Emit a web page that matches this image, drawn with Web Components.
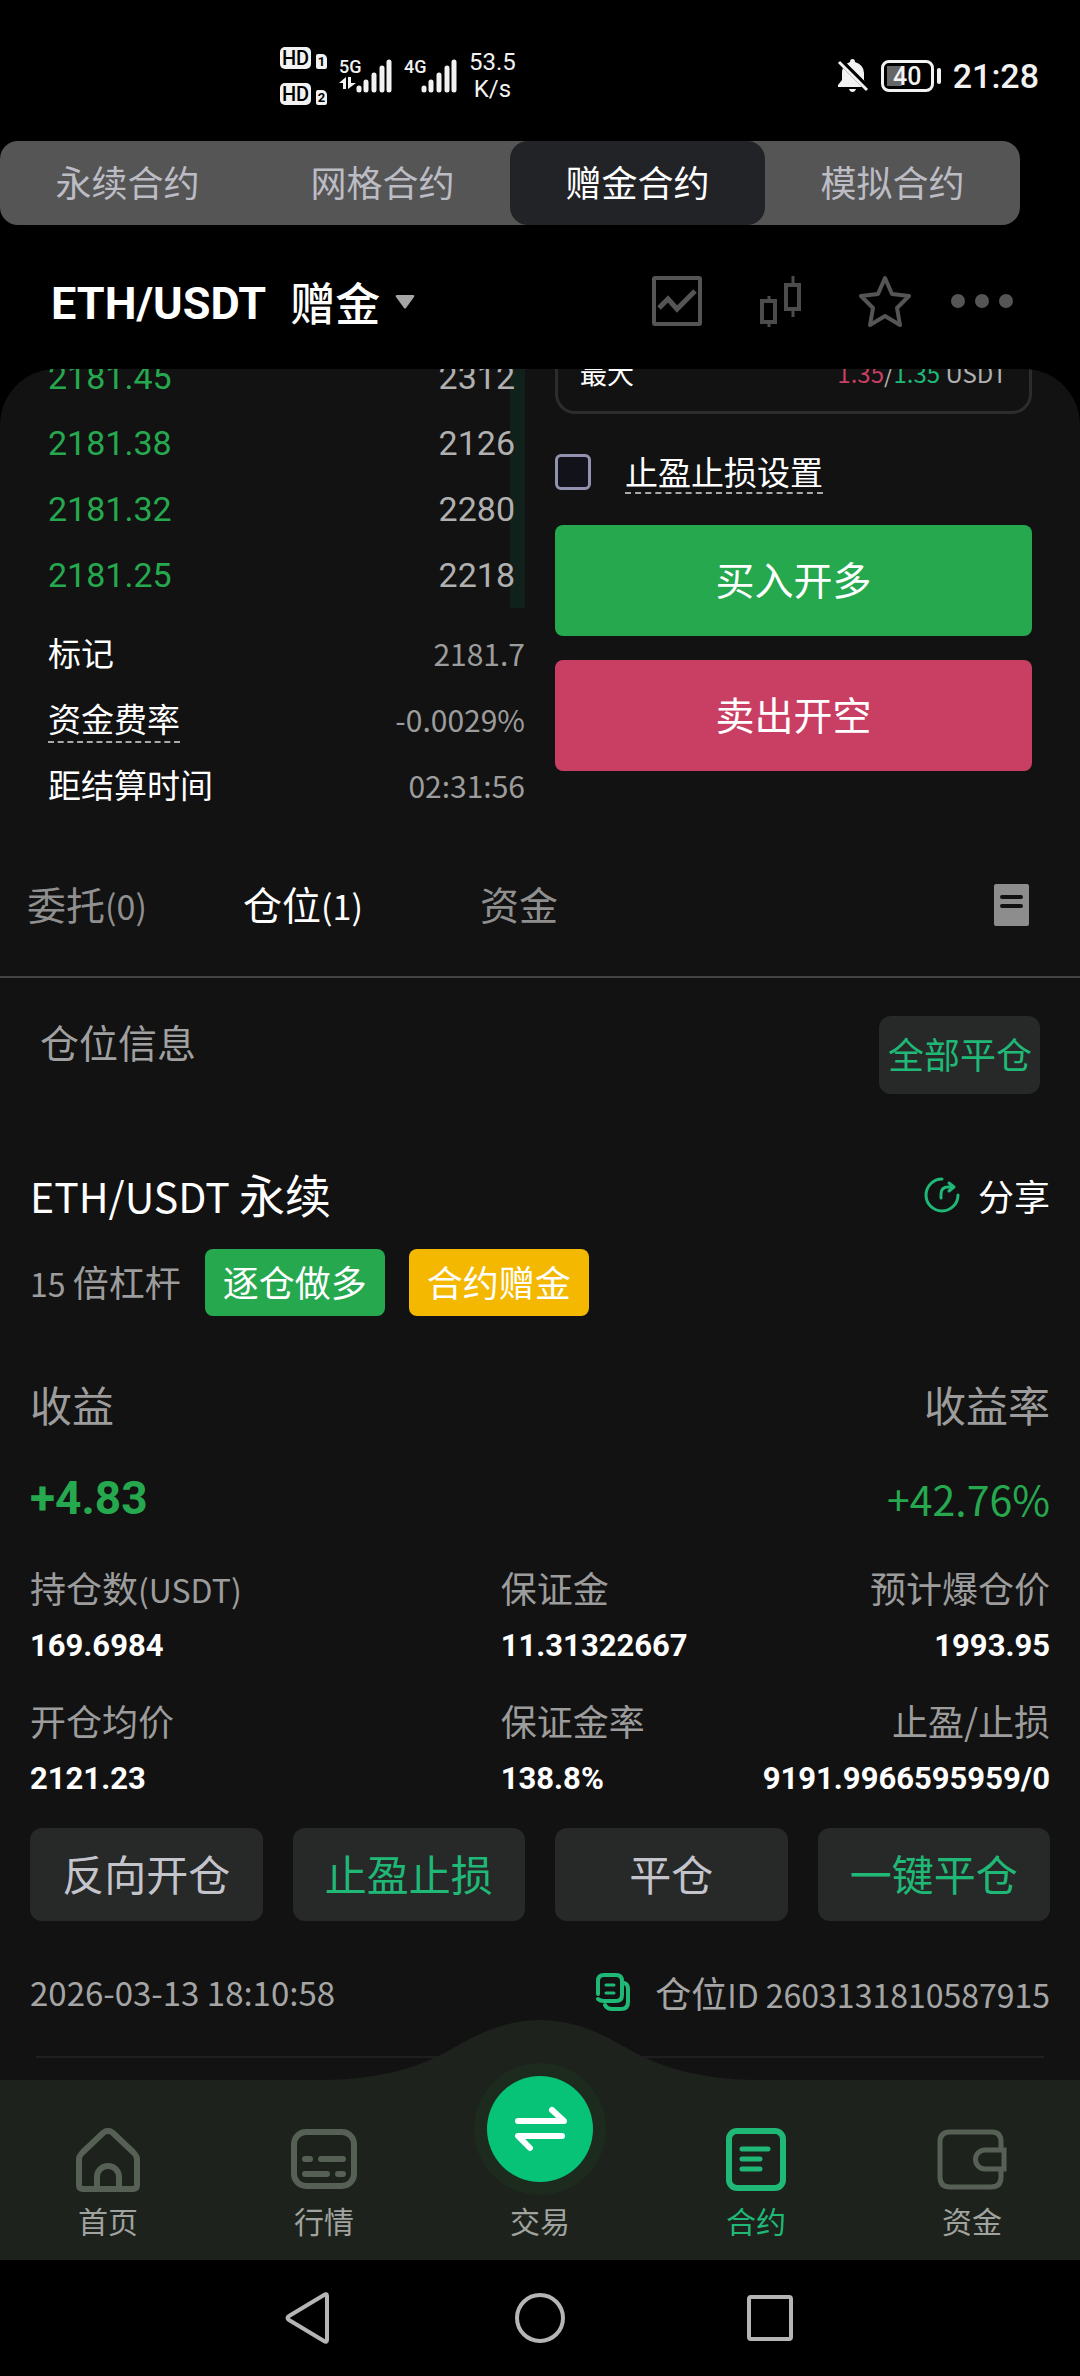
<!DOCTYPE html>
<html lang="zh-CN">
<head>
<meta charset="UTF-8">
<meta name="viewport" content="width=device-width, initial-scale=1.0">
<title>ETH/USDT 赠金合约</title>
<style>
    :root {
        --cjk: "Noto Sans CJK SC", "Noto Sans", sans-serif;
        --din: Roboto, "Noto Sans CJK SC", sans-serif;
        --green: #26a84f;
        --mint: #1fb877;
        --red: #c93f63;
        --yellow: #f4b800;
        --sheet: #121212;
        --panel: #272928;
        --bar: #1d221c;
        --muted: #9c9c9c;
    }

    body {
        margin: 0;
        min-height: 100vh;
        display: flex;
        flex-direction: column;
        background: #000;
        color: #fff;
        font-family: var(--cjk);
    }

    main {
        flex: 1;
        overflow: hidden;
        background: var(--sheet);
        border-radius: 56px 56px 0 0;
    }

    /* the list is scrolled a little under the header */
    .trade {
        display: grid;
        grid-template-columns: 1fr 1fr;
        gap: 30px;
        margin-top: -25px;
        padding: 0 48px;
    }
</style>
</head>
<body>
    <status-bar></status-bar>
    <contract-tabs></contract-tabs>
    <pair-header>ETH/USDT</pair-header>
    <main>
        <div class="trade">
            <order-book></order-book>
            <order-form></order-form>
        </div>
        <position-tabs></position-tabs>
        <position-card></position-card>
    </main>
    <tab-bar>
        <tab-item label="首页">
            <svg width="66" height="64" viewBox="0 0 66 64" fill="none" stroke="#566055" stroke-width="6" stroke-linejoin="round"><path d="M28 5Q33 1 38 5L58 24Q62 28 62 31V57Q62 61 58 61H8Q4 61 4 57V31Q4 28 8 24ZM22 60V49a11 11 0 0 1 22 0V60"/></svg>
        </tab-item>
        <tab-item label="行情">
            <svg width="68" height="64" viewBox="0 0 68 64" fill="none" stroke="#566055" stroke-width="6" stroke-linecap="round"><rect x="4" y="4" width="60" height="54" rx="12"/><path d="M15 31h5M31 31h22M15 46h22M48 46h5"/></svg>
        </tab-item>
        <tab-item label="交易"></tab-item>
        <tab-item label="合约" active>
            <svg width="62" height="64" viewBox="0 0 62 64" fill="none" stroke="#1fb877" stroke-width="6" stroke-linecap="round"><rect x="4" y="3" width="54" height="57" rx="8"/><path stroke-width="5" d="M17 21h26M17 31h18M17 41h18"/></svg>
        </tab-item>
        <tab-item label="资金">
            <svg width="70" height="64" viewBox="0 0 70 64" fill="none" stroke="#566055" stroke-width="5"><path d="M64 22V14Q64 4 55 4H13Q3 4 3 14V49Q3 59 13 59H54Q64 59 64 49V41M67 22H48a9 9 0 0 0 0 19H67Z"/></svg>
        </tab-item>
    </tab-bar>
    <system-nav></system-nav>

<script>
    class StatusBar extends HTMLElement {
        connectedCallback() {
            this.attachShadow({ mode: 'open' });
            this.shadowRoot.innerHTML = `
                <style>
                    :host {
                        display: flex;
                        align-items: center;
                        justify-content: space-between;
                        height: 131px;
                        padding: 10px 41px 0 280px;
                        font-family: var(--din);
                        color: #f2f2f2;
                    }

                    .group {
                        display: flex;
                        align-items: center;
                    }

                    .hd {
                        display: grid;
                        grid-template-columns: 31px 11px;
                        gap: 14px 5px;
                        align-items: end;
                        margin-right: 12px;
                    }

                    .hd b {
                        height: 22px;
                        border-radius: 5px;
                        background: #f2f2f2;
                        color: #000;
                        font-size: 20px;
                        font-weight: 500;
                        line-height: 22px;
                        text-align: center;
                    }

                    .hd i {
                        height: 15px;
                        border-radius: 2px 5px 2px 2px;
                        background: #f2f2f2;
                        color: #000;
                        font: bold 13px/15px Roboto, sans-serif;
                        text-align: center;
                    }

                    .signal {
                        display: flex;
                        align-items: flex-end;
                        margin-right: 12px;
                    }

                    .signal div {
                        display: flex;
                        flex-direction: column;
                        width: 18px;
                        height: 35px;
                        font-size: 18px;
                        font-weight: 500;
                        line-height: 18px;
                    }

                    .signal svg {
                        display: block;
                    }

                    .signal .bars {
                        margin-left: -1px;
                    }

                    .speed {
                        font-size: 24px;
                        line-height: 27px;
                        text-align: center;
                    }

                    .right {
                        gap: 12px;
                    }

                    .right time {
                        font-size: 34px;
                        font-weight: 500;
                        line-height: 40px;
                    }

                    .battery {
                        display: flex;
                        align-items: center;
                        gap: 3px;
                    }

                    .battery span {
                        box-sizing: border-box;
                        width: 53px;
                        height: 32px;
                        border: 3px solid #f2f2f2;
                        border-radius: 8px;
                        background: linear-gradient(#666, #666) 3px center / 15px 20px no-repeat;
                        font-size: 25px;
                        font-weight: 500;
                        line-height: 27px;
                        text-align: center;
                    }

                    .battery::after {
                        content: '';
                        width: 4px;
                        height: 16px;
                        border-radius: 2px;
                        background: #f2f2f2;
                    }
                </style>
                <div class="group">
                    <div class="hd"><b>HD</b><i>1</i><b>HD</b><i>2</i></div>
                    <div class="signal">
                        <div>5G<svg width="18" height="14" viewBox="0 0 18 14" fill="#f2f2f2"><path d="M0 7L7 1V13H4V7ZM9 1H12V7H17L9 13Z"/></svg></div>
                        ${this.bars()}
                    </div>
                    <div class="signal">
                        <div>4G</div>
                        ${this.bars()}
                    </div>
                    <div class="speed">53.5<br>K/s</div>
                </div>
                <div class="group right">
                    <svg width="32" height="34" viewBox="0 0 32 34" fill="#f2f2f2"><path d="M6 9L25 28H1V26L5 21V13Q5 11 6 9ZM9 5Q11 4 13 3Q13 0 15.500 0Q18 0 18 3Q27 6 27 14V21L28 23ZM12 30H19Q18 33 15.500 33Q13 33 12 30Z"/><path d="M2 3L30 31" stroke="#f2f2f2" stroke-width="3"/><path d="M5 1L32 28" stroke="#000" stroke-width="2"/></svg>
                    <div class="battery"><span>40</span></div>
                    <time>21:28</time>
                </div>
            `;
        }

        bars() {
            return `<svg class="bars" width="36" height="34" viewBox="0 0 36 34" stroke="#f2f2f2" stroke-width="5" stroke-linecap="round"><path d="M3 29V31M10 23V31M18 16V31M26 9V31M33 3V31"/></svg>`;
        }
    }

    class ContractTabs extends HTMLElement {
        connectedCallback() {
            this.attachShadow({ mode: 'open' });
            this.shadowRoot.innerHTML = `
                <style>
                    :host {
                        display: grid;
                        grid-template-columns: repeat(4, 1fr);
                        margin-right: 60px;
                        border-radius: 18px;
                        background: #555;
                    }

                    button {
                        height: 84px;
                        padding: 0 0 4px;
                        border: none;
                        border-radius: 18px;
                        background: none;
                        color: #bcbcc4;
                        font: 36px/80px var(--cjk);
                        cursor: pointer;
                    }

                    button.active {
                        background: #222327;
                        color: #fff;
                    }
                </style>
                <button>永续合约</button>
                <button>网格合约</button>
                <button class="active">赠金合约</button>
                <button>模拟合约</button>
            `;
        }
    }

    class PairHeader extends HTMLElement {
        connectedCallback() {
            this.attachShadow({ mode: 'open' });
            this.shadowRoot.innerHTML = `
                <style>
                    :host {
                        display: flex;
                        align-items: center;
                        justify-content: space-between;
                        height: 144px;
                        padding: 8px 66px 0 51px;
                        box-sizing: border-box;
                    }

                    .pair, .tools {
                        display: flex;
                        align-items: center;
                    }

                    .pair {
                        padding-top: 6px;
                    }

                    h1 {
                        margin: 0;
                        font: bold 45px/60px var(--din);
                    }

                    .pair button {
                        display: flex;
                        align-items: center;
                        gap: 15px;
                        margin-left: 24px;
                        padding: 0 0 4px;
                        font: 500 45px/60px var(--cjk);
                        color: #fff;
                    }

                    button {
                        display: flex;
                        justify-content: center;
                        padding: 0;
                        border: none;
                        background: none;
                        cursor: pointer;
                    }

                    .tools {
                        gap: 24px;
                    }

                    .tools button {
                        width: 80px;
                    }

                    .tools button:last-child {
                        width: 65px;
                    }
                </style>
                <div class="pair">
                    <h1><slot></slot></h1>
                    <button>赠金<svg width="20" height="16" viewBox="0 0 20 16"><path d="M2 1H18Q20 1 19 3L11 14Q10 15 9 14L1 3Q0 1 2 1Z" fill="#a5a5a5"/></svg></button>
                </div>
                <div class="tools">
                    <button aria-label="走势图"><svg width="52" height="52" viewBox="0 0 52 52" fill="none" stroke="#555"><rect x="3" y="3" width="46" height="46" rx="1" stroke-width="4"/><path d="M8 33L17 24L26 34L44 16" stroke-width="5"/></svg></button>
                    <button aria-label="K线"><svg width="42" height="52" viewBox="0 0 42 52" fill="none" stroke="#4c4c4c" stroke-width="4"><path d="M2 26H15V47H2ZM26 10H39V34H26Z"/><path d="M9 21V26M9 47V52M33 1V10M33 34V42" stroke-width="3"/></svg></button>
                    <button aria-label="收藏"><svg width="52" height="52" viewBox="0 0 52 52" fill="none" stroke="#555" stroke-width="4" stroke-linejoin="round"><path d="M26 3L33 19L50 21L38 33L41 50L26 41L11 50L14 33L2 21L19 19Z"/></svg></button>
                    <button aria-label="更多"><svg width="62" height="52" viewBox="0 0 62 52" fill="#555"><circle cx="7" cy="26" r="7"/><circle cx="31" cy="26" r="7"/><circle cx="55" cy="26" r="7"/></svg></button>
                </div>
            `;
        }
    }

    class OrderBook extends HTMLElement {
        connectedCallback() {
            const levels = [
                ['2181.45', '2312'],
                ['2181.38', '2126'],
                ['2181.32', '2280'],
                ['2181.25', '2218']
            ];

            this.attachShadow({ mode: 'open' });
            this.shadowRoot.innerHTML = `
                <style>
                    :host {
                        display: block;
                    }

                    table {
                        width: 100%;
                        border-collapse: collapse;
                        font: 34px/66px var(--din);
                    }

                    td {
                        padding: 0;
                        color: var(--green);
                    }

                    td:last-child {
                        padding-right: 10px;
                        background: linear-gradient(#10201b, #10201b) right / 15px 100% no-repeat;
                        color: #b0b0b0;
                        text-align: right;
                    }

                    dl {
                        display: grid;
                        grid-template-columns: auto 1fr;
                        grid-auto-rows: 66px;
                        margin: 11px 0 0;
                        line-height: 66px;
                        align-items: baseline;
                    }

                    dt {
                        font-size: 33px;
                    }

                    dt span {
                        display: inline-block;
                        line-height: 46px;
                        border-bottom: 2px dashed #aaa;
                    }

                    dd {
                        margin: 0;
                        font-size: 30px;
                        color: var(--muted);
                        text-align: right;
                    }
                </style>
                <table>
                    <tbody>
                        ${levels.map(([price, size]) => `<tr><td>${price}</td><td>${size}</td></tr>`).join('')}
                    </tbody>
                </table>
                <dl>
                    <dt>标记</dt><dd>2181.7</dd>
                    <dt><span>资金费率</span></dt><dd>-0.0029%</dd>
                    <dt>距结算时间</dt><dd>02:31:56</dd>
                </dl>
            `;
        }
    }

    class OrderForm extends HTMLElement {
        connectedCallback() {
            this.attachShadow({ mode: 'open' });
            this.shadowRoot.innerHTML = `
                <style>
                    :host {
                        display: block;
                    }

                    .max {
                        display: flex;
                        align-items: center;
                        justify-content: space-between;
                        box-sizing: border-box;
                        height: 70px;
                        padding: 0 22px 10px;
                        border: 3px solid #2c2c2c;
                        border-top: none;
                        border-radius: 0 0 20px 20px;
                        font-size: 27px;
                        line-height: 36px;
                    }

                    .max span {
                        font-size: 24px;
                        color: #b0b0b0;
                    }

                    .max em {
                        font-style: normal;
                        color: var(--red);
                    }

                    .max em + em {
                        color: var(--mint);
                    }

                    .stop {
                        display: flex;
                        align-items: center;
                        gap: 34px;
                        margin: 36px 0 31px;
                    }

                    input {
                        appearance: none;
                        box-sizing: border-box;
                        width: 36px;
                        height: 36px;
                        margin: 0;
                        border: 3px solid #9292b0;
                        border-radius: 6px;
                        background: #12121a;
                    }

                    label {
                        border-bottom: 2px dashed #aaa;
                        font-size: 33px;
                        line-height: 42px;
                    }

                    button {
                        display: block;
                        width: 100%;
                        height: 111px;
                        padding: 0 0 6px;
                        border: none;
                        border-radius: 8px;
                        background: var(--green);
                        color: #fff;
                        font: 39px/60px var(--cjk);
                        cursor: pointer;
                    }

                    button.sell {
                        margin-top: 24px;
                        background: var(--red);
                    }
                </style>
                <div class="max">最大<span><em>1.35</em>/<em>1.35</em> USDT</span></div>
                <div class="stop">
                    <input type="checkbox" id="stop">
                    <label for="stop">止盈止损设置</label>
                </div>
                <button class="buy">买入开多</button>
                <button class="sell">卖出开空</button>
            `;
        }
    }

    class PositionTabs extends HTMLElement {
        connectedCallback() {
            this.attachShadow({ mode: 'open' });
            this.shadowRoot.innerHTML = `
                <style>
                    :host {
                        display: flex;
                        align-items: center;
                        justify-content: space-between;
                        height: 138px;
                        margin-top: 19px;
                        padding: 0 51px 2px 27px;
                        border-bottom: 2px solid #444;
                    }

                    nav {
                        display: flex;
                        gap: 96px;
                    }

                    button {
                        min-width: 120px;
                        padding: 0 0 4px;
                        border: none;
                        background: none;
                        color: #8f8f8f;
                        font: 39px/60px var(--cjk);
                        white-space: nowrap;
                        cursor: pointer;
                    }

                    button span {
                        font-size: 34px;
                        line-height: 1;
                    }

                    button.active {
                        color: #fff;
                    }

                    .history {
                        display: flex;
                        min-width: 0;
                        padding: 0;
                    }
                </style>
                <nav>
                    <button>委托<span>(0)</span></button>
                    <button class="active">仓位<span>(1)</span></button>
                    <button>资金</button>
                </nav>
                <button class="history" aria-label="历史记录"><svg width="35" height="42" viewBox="0 0 35 42"><rect width="35" height="42" rx="2" fill="#8d8d8d"/><path d="M8 13H27M8 22H27" stroke="#121212" stroke-width="4" stroke-linecap="round"/></svg></button>
            `;
        }
    }

    class PositionCard extends HTMLElement {
        connectedCallback() {
            this.attachShadow({ mode: 'open' });
            this.shadowRoot.innerHTML = `
                <style>
                    :host {
                        display: block;
                        padding: 0 30px 22px;
                    }

                    header, .title, .pnl, footer {
                        display: flex;
                        justify-content: space-between;
                    }

                    h2, h3 {
                        margin: 0;
                        font-weight: 400;
                    }

                    button {
                        padding: 0;
                        border: none;
                        border-radius: 12px;
                        background: var(--panel);
                        color: #c4c4cc;
                        font: 36px/60px var(--cjk);
                        cursor: pointer;
                    }

                    button.mint {
                        color: var(--mint);
                    }

                    header {
                        align-items: flex-start;
                        padding: 38px 10px 0;
                    }

                    h2 {
                        font-size: 39px;
                        line-height: 50px;
                        color: #a0a0a0;
                    }

                    header button {
                        height: 78px;
                        padding: 0 8px 4px 9px;
                    }

                    .title {
                        align-items: center;
                        height: 66px;
                        margin-top: 66px;
                    }

                    h3 {
                        font-size: 46px;
                        line-height: 66px;
                    }

                    h3 span {
                        font-size: 41px;
                        line-height: 1;
                    }

                    .title button {
                        display: flex;
                        align-items: center;
                        gap: 18px;
                        padding-top: 4px;
                        background: none;
                        color: #fff;
                    }

                    .tags {
                        display: flex;
                        gap: 24px;
                        height: 67px;
                        margin-top: 23px;
                        font-size: 36px;
                        line-height: 64px;
                        color: var(--muted);
                    }

                    .num {
                        font-size: 32px;
                        line-height: 1;
                    }

                    .tag {
                        padding: 0 18px;
                        border-radius: 8px;
                        background: var(--green);
                        color: #fff;
                    }

                    .tag.gift {
                        background: var(--yellow);
                    }

                    .pnl {
                        height: 60px;
                        line-height: 60px;
                    }

                    .pnl.label {
                        margin-top: 58px;
                        font-size: 42px;
                        color: var(--muted);
                    }

                    .pnl.value {
                        margin-top: 34px;
                        font-size: 41px;
                        color: var(--green);
                    }

                    .pnl b {
                        font-family: var(--din);
                        font-size: 46px;
                    }

                    dl {
                        display: grid;
                        grid-template-columns: 6fr 3fr 4fr;
                        row-gap: 18px;
                        margin: 31px 0 21px;
                        line-height: 56px;
                    }

                    dl div:nth-child(3n) {
                        text-align: right;
                    }

                    dt {
                        height: 59px;
                        font-size: 36px;
                        color: var(--muted);
                    }

                    dd {
                        margin: 0;
                        height: 56px;
                        font-family: var(--din);
                        font-size: 31px;
                        font-weight: 700;
                    }

                    .actions {
                        display: grid;
                        grid-template-columns: repeat(4, 1fr);
                        gap: 30px;
                    }

                    .actions button {
                        height: 93px;
                        padding-bottom: 4px;
                        font-size: 42px;
                    }

                    footer {
                        align-items: center;
                        height: 48px;
                        margin: 47px 0 0;
                        font-size: 36px;
                        line-height: 48px;
                        color: #a5a5a5;
                    }

                    footer time {
                        font-size: 33px;
                    }

                    footer div {
                        display: flex;
                        gap: 24px;
                        align-items: center;
                    }

                    footer button {
                        display: flex;
                        background: none;
                    }

                    hr {
                        margin: 40px 6px 0;
                        border: none;
                        border-top: 2px solid #1f1f1f;
                    }
                </style>
                <header>
                    <h2>仓位信息</h2>
                    <button class="mint">全部平仓</button>
                </header>
                <div class="title">
                    <h3><span>ETH/USDT </span>永续</h3>
                    <button><svg width="36" height="36" viewBox="0 0 36 36" fill="none" stroke="#1fb877" stroke-width="3" stroke-linecap="round"><path d="M18 2A16 16 0 1 0 34 18"/><path d="M17 21V17Q17 10 24 10H29M25 6L30 10L25 14" stroke-linejoin="round"/></svg>分享</button>
                </div>
                <div class="tags">
                    <div><span class="num">15 </span>倍杠杆</div>
                    <div class="tag">逐仓做多</div>
                    <div class="tag gift">合约赠金</div>
                </div>
                <div class="pnl label"><span>收益</span><span>收益率</span></div>
                <div class="pnl value"><b>+4.83</b><span>+42.76%</span></div>
                <dl>
                    <div><dt>持仓数<span class="num">(USDT)</span></dt><dd>169.6984</dd></div>
                    <div><dt>保证金</dt><dd>11.31322667</dd></div>
                    <div><dt>预计爆仓价</dt><dd>1993.95</dd></div>
                    <div><dt>开仓均价</dt><dd>2121.23</dd></div>
                    <div><dt>保证金率</dt><dd>138.8%</dd></div>
                    <div><dt>止盈/止损</dt><dd>9191.9966595959/0</dd></div>
                </dl>
                <div class="actions">
                    <button>反向开仓</button>
                    <button class="mint">止盈止损</button>
                    <button>平仓</button>
                    <button class="mint">一键平仓</button>
                </div>
                <footer>
                    <time>2026-03-13 18:10:58</time>
                    <div>
                        <button aria-label="复制"><svg width="36" height="40" viewBox="0 0 36 40" fill="none" stroke="#1fb877" stroke-width="4" stroke-linecap="round"><path d="M3 22V9Q3 3 9 3H21Q27 3 27 9V23Q27 29 21 29H9Q5 29 3 27M29 11Q33 12 33 17V30Q33 37 26 37H17Q12 37 10 33"/><path d="M11 13H19M11 21H19" stroke-width="3"/></svg></button>
                        <span>仓位<span class="num">ID 2603131810587915</span></span>
                    </div>
                </footer>
                <hr>
            `;
        }
    }

    class TabBar extends HTMLElement {
        connectedCallback() {
            this.attachShadow({ mode: 'open' });
            this.shadowRoot.innerHTML = `
                <style>
                    :host {
                        display: grid;
                        grid-template-columns: repeat(5, 1fr);
                        position: relative;
                        background: var(--bar);
                    }

                    /* swap button on its hump, over the page and the bar */
                    .hump {
                        position: absolute;
                        left: 50%;
                        top: -60px;
                        transform: translateX(-50%);
                        pointer-events: none;
                    }
                </style>
                <svg class="hump" width="440" height="180" viewBox="0 0 440 180">
                    <path d="M0 61V60C70 60 110 42 135 27C165 10 190 0 220 0S275 10 305 27C330 42 370 60 440 60V61Z" fill="#1d221c"/>
                    <circle cx="220" cy="109" r="66" fill="#1d2b1e"/>
                    <circle cx="220" cy="109" r="53" fill="#06c378"/>
                    <path d="M198 101H244L232 90M242 116H198L210 128" fill="none" stroke="#fff" stroke-width="6" stroke-linecap="round" stroke-linejoin="round"/>
                </svg>
                <slot></slot>
            `;
        }
    }

    class TabItem extends HTMLElement {
        connectedCallback() {
            this.attachShadow({ mode: 'open' });
            this.shadowRoot.innerHTML = `
                <style>
                    :host {
                        display: block;
                    }

                    a {
                        display: flex;
                        flex-direction: column;
                        align-items: center;
                        padding: 48px 0 18px;
                        color: #a0a39f;
                        font-size: 30px;
                        line-height: 44px;
                        text-decoration: none;
                    }

                    :host([active]) a {
                        color: var(--mint);
                    }

                    .icon {
                        height: 70px;
                    }
                </style>
                <a href="#"><span class="icon"><slot></slot></span><span>${this.getAttribute('label')}</span></a>
            `;
        }
    }

    class SystemNav extends HTMLElement {
        connectedCallback() {
            this.attachShadow({ mode: 'open' });
            this.shadowRoot.innerHTML = `
                <style>
                    :host {
                        display: flex;
                        align-items: center;
                        justify-content: center;
                        gap: 178px;
                        height: 116px;
                        background: #000;
                    }

                    button {
                        display: flex;
                        padding: 0;
                        border: none;
                        background: none;
                    }
                </style>
                <button aria-label="返回"><svg width="52" height="52" viewBox="0 0 52 52" fill="none" stroke="#b5b5b5" stroke-width="4" stroke-linejoin="round"><path d="M40 3Q43 1 43 4V48Q43 51 40 49L5 28Q2 26 5 24Z"/></svg></button>
                <button aria-label="主页"><svg width="52" height="52" viewBox="0 0 52 52" fill="none" stroke="#b5b5b5" stroke-width="4"><circle cx="26" cy="26" r="23"/></svg></button>
                <button aria-label="最近任务"><svg width="52" height="52" viewBox="0 0 52 52" fill="none" stroke="#b5b5b5" stroke-width="4"><rect x="5" y="5" width="42" height="42" rx="2"/></svg></button>
            `;
        }
    }

    customElements.define('status-bar', StatusBar);
    customElements.define('contract-tabs', ContractTabs);
    customElements.define('pair-header', PairHeader);
    customElements.define('order-book', OrderBook);
    customElements.define('order-form', OrderForm);
    customElements.define('position-tabs', PositionTabs);
    customElements.define('position-card', PositionCard);
    customElements.define('tab-bar', TabBar);
    customElements.define('tab-item', TabItem);
    customElements.define('system-nav', SystemNav);
</script>
</body>
</html>
